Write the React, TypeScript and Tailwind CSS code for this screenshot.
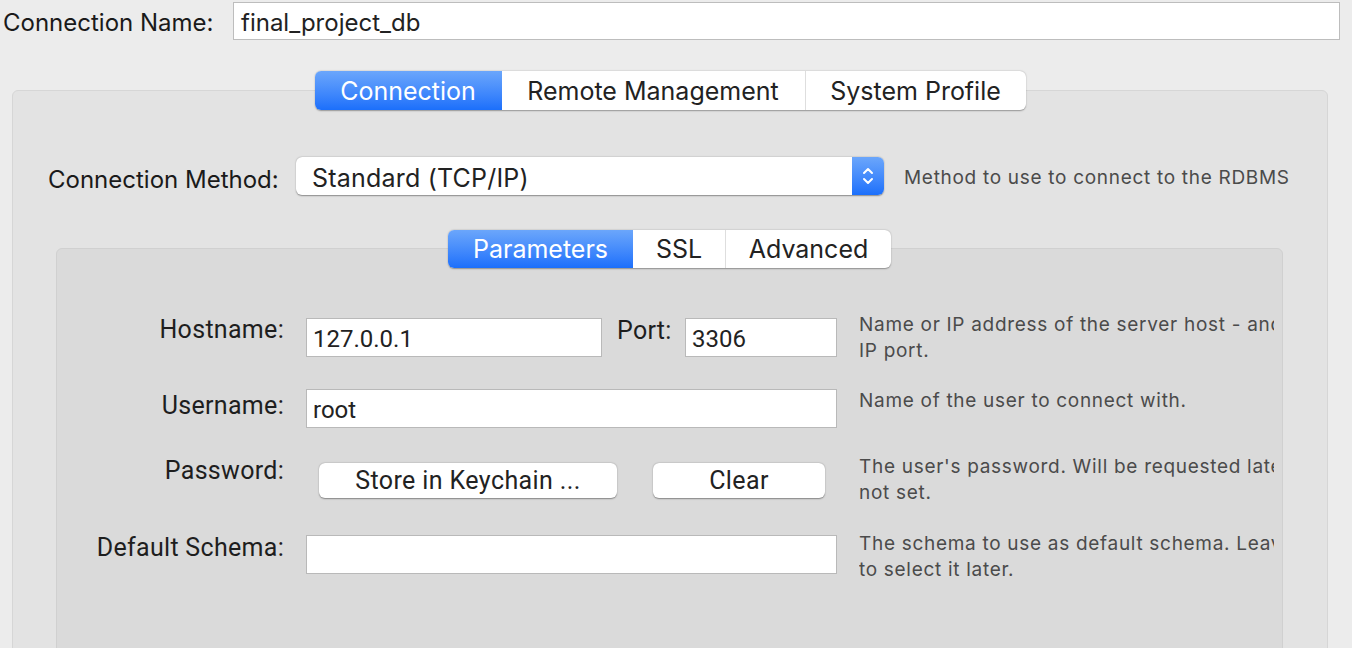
import React from 'react'

const SANS = 'font-["Inter","Noto_Sans",sans-serif]'
const NARROW = 'font-["Roboto","Liberation_Sans",sans-serif]'

function SegTabs({
  items,
  active,
  widths,
  height,
}: {
  items: string[]
  active: number
  widths: number[]
  height: string
}) {
  return (
    <div
      className={`relative z-10 flex ${height} rounded-[6px] bg-white shadow-[0_0.5px_1.5px_rgba(0,0,0,0.35)] overflow-hidden`}
    >
      {items.map((label, i) => (
        <div
          key={label}
          style={{ width: widths[i] }}
          className={`flex items-center justify-center pt-[1px] text-[25px] leading-none ${
            i === active
              ? 'bg-gradient-to-b from-[#6ba6fb] to-[#1b6ffb] text-white'
              : 'text-[#222]'
          } ${i > 0 && i !== active + 1 ? 'border-l border-[#dedede]' : ''}`}
        >
          {label}
        </div>
      ))}
    </div>
  )
}

function TextBox({ value, className = '' }: { value?: string; className?: string }) {
  return (
    <div
      className={`h-[39px] bg-white border border-[#b9b9b9] flex items-center pl-[6px] pt-[3px] ${NARROW} text-[24px] leading-[26px] text-[#222] ${className}`}
    >
      {value}
    </div>
  )
}

function Help({ lines, className = '' }: { lines: string[]; className?: string }) {
  return (
    <div className={`w-[415px] overflow-hidden ${className}`}>
      {lines.map((l) => (
        <div key={l} className="whitespace-nowrap text-[19px] leading-[26px] text-[#4b4b4b] tracking-[0.7px]">
          {l}
        </div>
      ))}
    </div>
  )
}

function Label({ text, pt }: { text: string; pt: string }) {
  return (
    <div className={`w-[227px] shrink-0 text-right ${NARROW} text-[25px] leading-[26px] tracking-[0.3px] text-[#1e1e1e] ${pt}`}>
      {text}
    </div>
  )
}

export default function App() {
  return (
    <div className={`w-[1352px] h-[648px] overflow-hidden bg-[#ececec] ${SANS}`}>
      {/* Connection name */}
      <div className="flex items-center pt-[2px]">
        <div className="w-[233px] pl-[3px] pt-[3px] text-[24px] leading-[26px] text-[#1a1a1a]">Connection Name:</div>
        <div className="w-[1107px] h-[38px] bg-white border border-[#bdbdbd] flex items-center pl-[7px] pt-[3px] text-[24px] leading-[26px] text-[#222]">
          final_project_db
        </div>
      </div>

      {/* Outer panel */}
      <div className="ml-[12px] mt-[50px] w-[1316px] h-[600px] rounded-[6px] bg-[#e3e3e3] border border-[#d6d6d6]">
        <div className="flex justify-center -mt-[20px]">
          <SegTabs
            items={['Connection', 'Remote Management', 'System Profile']}
            active={0}
            widths={[187, 303, 221]}
            height="h-[39px]"
          />
        </div>

        {/* Connection method */}
        <div className="flex items-center h-[38px] mt-[47px]">
          <div className="w-[283px] pl-[35px] pt-[8px] text-[24px] leading-[26px] text-[#1a1a1a]">Connection Method:</div>
          <div className="w-[588px] h-[38px] flex rounded-[6px] bg-white shadow-[0_0.5px_1.5px_rgba(0,0,0,0.4)] overflow-hidden">
            <div className="flex-1 flex items-center pl-[16px] pt-[4px] text-[25px] leading-[26px] tracking-[0.2px] text-[#222]">Standard (TCP/IP)</div>
            <div className="w-[32px] bg-gradient-to-b from-[#6ba6fb] to-[#1b6ffb] flex items-center justify-center">
              <svg width="14" height="24" viewBox="0 0 14 24" fill="none" stroke="white" strokeWidth="2" strokeLinecap="round" strokeLinejoin="round">
                <path d="M3 9 L7 5 L11 9" />
                <path d="M3 15 L7 19 L11 15" />
              </svg>
            </div>
          </div>
          <div className="ml-[20px] pt-[4px] text-[19px] leading-[26px] text-[#4b4b4b] tracking-[0.7px]">Method to use to connect to the RDBMS</div>
        </div>

        {/* Inner panel */}
        <div className="ml-[43px] mt-[53px] w-[1227px] h-[420px] rounded-[6px] bg-[#dadada] border border-[#d0d0d0]">
          <div className="flex justify-center -mt-[19px]">
            <SegTabs items={['Parameters', 'SSL', 'Advanced']} active={0} widths={[185, 92, 166]} height="h-[38px]" />
          </div>

          <div className="mt-[44px] flex flex-col">
            {/* Hostname / Port */}
            <div className="flex items-start h-[76px]">
              <Label text="Hostname:" pt="pt-[5px]" />
              <div className="ml-[22px] mt-[6px] flex items-start w-[531px]">
                <TextBox value="127.0.0.1" className="w-[296px]" />
                <div className={`w-[83px] pl-[15px] ${NARROW} text-[25px] leading-[26px] tracking-[0.3px] text-[#1e1e1e]`}>Port:</div>
                <TextBox value="3306" className="w-[152px]" />
              </div>
              <Help className="ml-[22px]" lines={['Name or IP address of the server host - and TCP/', 'IP port.']} />
            </div>

            {/* Username */}
            <div className="flex items-start h-[66px]">
              <Label text="Username:" pt="pt-[5px]" />
              <div className="ml-[22px] mt-[1px] w-[531px]">
                <TextBox value="root" className="w-[531px]" />
              </div>
              <Help className="ml-[22px]" lines={['Name of the user to connect with.']} />
            </div>

            {/* Password */}
            <div className="flex items-start h-[77px]">
              <Label text="Password:" pt="pt-[4px]" />
              <div className="ml-[22px] mt-[9px] w-[531px] flex items-start">
                <div className={`ml-[13px] w-[298px] h-[35px] rounded-[6px] bg-white shadow-[0_0.5px_1.5px_rgba(0,0,0,0.4)] flex items-center justify-center ${NARROW} text-[25px] tracking-[0.4px] text-[#222]`}>
                  Store in Keychain ...
                </div>
                <div className={`ml-[36px] w-[172px] h-[35px] rounded-[6px] bg-white shadow-[0_0.5px_1.5px_rgba(0,0,0,0.4)] flex items-center justify-center ${NARROW} text-[25px] tracking-[0.4px] text-[#222]`}>
                  Clear
                </div>
              </div>
              <Help className="ml-[22px]" lines={["The user's password. Will be requested later if it's", 'not set.']} />
            </div>

            {/* Default schema */}
            <div className="flex items-start">
              <Label text="Default Schema:" pt="pt-[4px]" />
              <div className="ml-[22px] mt-[4px] w-[531px]">
                <TextBox className="w-[531px]" />
              </div>
              <Help className="ml-[22px]" lines={['The schema to use as default schema. Leave blank', 'to select it later.']} />
            </div>
          </div>
        </div>
      </div>
    </div>
  )
}
